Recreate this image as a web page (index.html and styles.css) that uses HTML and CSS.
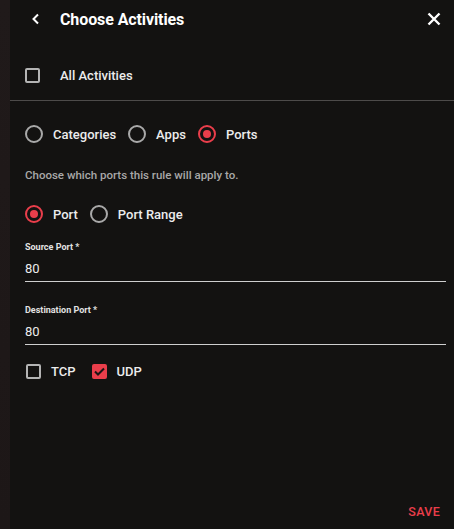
FILE: index.html
```html
<!DOCTYPE html>
<html>
<head>
<meta charset="utf-8">
<link rel="stylesheet" href="styles.css">
</head>
<body>
<div class="app">
  <div class="strip"></div>
  <div class="panel">
    <div class="header">
      <svg class="back" width="10" height="12" viewBox="0 0 10 12"><path d="M7 1.5 L2.5 6 L7 10.5" fill="none" stroke="#fff" stroke-width="2"/></svg>
      <div class="title">Choose Activities</div>
      <svg class="close" width="14" height="14" viewBox="0 0 14 14"><path d="M1.5 1.5 L12.5 12.5 M12.5 1.5 L1.5 12.5" stroke="#fff" stroke-width="2.4"/></svg>
    </div>
    <div class="row all">
      <span class="check"></span><span class="lbl all-lbl">All Activities</span>
    </div>
    <div class="divider"></div>
    <div class="row radios">
      <span class="opt"><span class="radio"></span><span class="lbl">Categories</span></span>
      <span class="opt"><span class="radio"></span><span class="lbl">Apps</span></span>
      <span class="opt"><span class="radio on"></span><span class="lbl">Ports</span></span>
    </div>
    <div class="help">Choose which ports this rule will apply to.</div>
    <div class="row radios port-row">
      <span class="opt"><span class="radio on"></span><span class="lbl">Port</span></span>
      <span class="opt"><span class="radio"></span><span class="lbl">Port Range</span></span>
    </div>
    <div class="field first">
      <div class="flabel">Source Port *</div>
      <div class="fvalue">80</div>
    </div>
    <div class="field">
      <div class="flabel">Destination Port *</div>
      <div class="fvalue">80</div>
    </div>
    <div class="row protos">
      <span class="opt"><span class="check"></span><span class="lbl">TCP</span></span>
      <span class="opt"><span class="check on"><svg width="11" height="9" viewBox="0 0 11 9"><path d="M1 4.5 L4 7.5 L10 1.5" fill="none" stroke="#1a1414" stroke-width="2"/></svg></span><span class="lbl">UDP</span></span>
    </div>
    <div class="footer"><span class="save">SAVE</span></div>
  </div>
</div>
</body>
</html>
```
FILE: styles.css
```css
html, body {
  margin: 0;
  padding: 0;
  height: 100%;
  background: #131211;
  font-family: Roboto, "Liberation Sans", sans-serif;
}
.app {
  display: flex;
  height: 100vh;
}
.strip {
  width: 10px;
  flex: none;
  background: linear-gradient(#201a1a, #1d1717);
}
.panel {
  flex: 1;
  display: flex;
  flex-direction: column;
  padding: 0 8px 0 15px;
  box-sizing: border-box;
}
.header {
  height: 38px;
  display: flex;
  align-items: center;
}
.back {
  margin-left: 6px;
  margin-right: 19px;
}
.title {
  color: #fff;
  font-size: 16px;
  font-weight: 700;
  flex: 1;
  letter-spacing: -0.1px;
}
.close {
  margin-right: 5px;
}
.row {
  display: flex;
  align-items: center;
  height: 24px;
}
.all {
  margin-top: 25px;
}
.divider {
  height: 1px;
  background: #4d4b4a;
  margin: 13px -8px 0 -15px;
}
.check {
  width: 15px;
  height: 15px;
  box-sizing: border-box;
  border: 2px solid #b4b4b4;
  border-radius: 2px;
  flex: none;
  display: flex;
  align-items: center;
  justify-content: center;
}
.check.on {
  background: #ea3e4b;
  border-color: #ea3e4b;
}
.lbl {
  color: #ececec;
  font-size: 13px;
  font-weight: 500;
}
.all-lbl {
  margin-left: 20px;
}
.radios {
  margin-top: 21px;
}
.opt {
  display: flex;
  align-items: center;
  margin-right: 12px;
}
.opt .lbl {
  margin-left: 10px;
}
.radio {
  width: 18px;
  height: 18px;
  box-sizing: border-box;
  border: 2px solid #a9a9a9;
  border-radius: 50%;
  flex: none;
  display: flex;
  align-items: center;
  justify-content: center;
}
.radio.on {
  border-color: #ea3e4b;
}
.radio.on::after {
  content: "";
  width: 8px;
  height: 8px;
  border-radius: 50%;
  background: #ea3e4b;
}
.help {
  margin-top: 21px;
  color: #a8a8a8;
  font-size: 11.5px;
  line-height: 16px;
  font-weight: 500;
}
.port-row {
  margin-top: 19px;
}
.field {
  margin-top: 22px;
  border-bottom: 1px solid #cfcfcf;
}
.field.first {
  margin-top: 15px;
}
.flabel {
  color: #e2e2e2;
  font-size: 9px;
  line-height: 12px;
  font-weight: 700;
}
.fvalue {
  margin-top: 7px;
  color: #ececec;
  font-size: 13px;
  line-height: 18px;
  padding-bottom: 3px;
}
.protos {
  margin-top: 14px;
}
.protos .opt {
  margin-left: 1px;
  margin-right: 15px;
}
.footer {
  margin-top: auto;
  display: flex;
  justify-content: flex-end;
  padding: 0 6px 9px 0;
}
.save {
  color: #ea3e4b;
  font-size: 12.5px;
  font-weight: 500;
  line-height: 16px;
  letter-spacing: 0.3px;
}
```
